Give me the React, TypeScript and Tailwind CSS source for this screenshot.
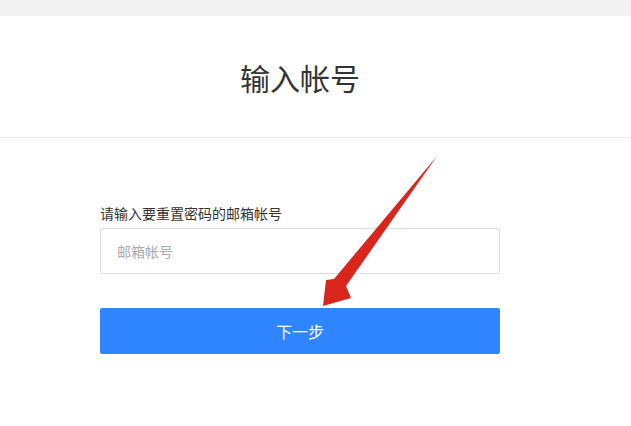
import React from 'react'

const font = { fontFamily: '"Noto Sans CJK SC", "Noto Sans", sans-serif' }

const Arrow = () => (
  <svg
    className="absolute left-0 top-0 pointer-events-none"
    width="631"
    height="426"
    viewBox="0 0 631 426"
  >
    <polygon
      points="437,156 346,286 351,298 323,306 326,280 334,279"
      fill="#d8261d"
    />
  </svg>
)

export default function App() {
  return (
    <div className="relative w-[631px] h-[426px] bg-white overflow-hidden" style={font}>
      {/* top bar */}
      <div className="h-4 bg-[#f3f3f3]" />

      {/* header */}
      <div className="h-[122px] border-b border-[#e8e8e8]">
        <div className="w-[600px] h-full flex items-center justify-center pt-[2px]">
          <h1 className="text-[30px] text-[#333] font-normal">输入帐号</h1>
        </div>
      </div>

      {/* form */}
      <div className="w-[400px] ml-[100px] mt-[66px]">
        <label className="block text-[14px] leading-[18px] text-[#333] mb-[6px]">
          请输入要重置密码的邮箱帐号
        </label>
        <input
          type="text"
          placeholder="邮箱帐号"
          className="w-full h-[46px] border border-[#dcdcdc] rounded-[2px] px-4 text-[14px] text-[#333] placeholder:text-[#aaa] outline-none"
          style={font}
        />
        <button
          className="mt-[34px] w-full h-[46px] bg-[#2e85ff] rounded-[2px] text-white text-[16px]"
          style={font}
        >
          下一步
        </button>
      </div>

      <Arrow />
    </div>
  )
}
